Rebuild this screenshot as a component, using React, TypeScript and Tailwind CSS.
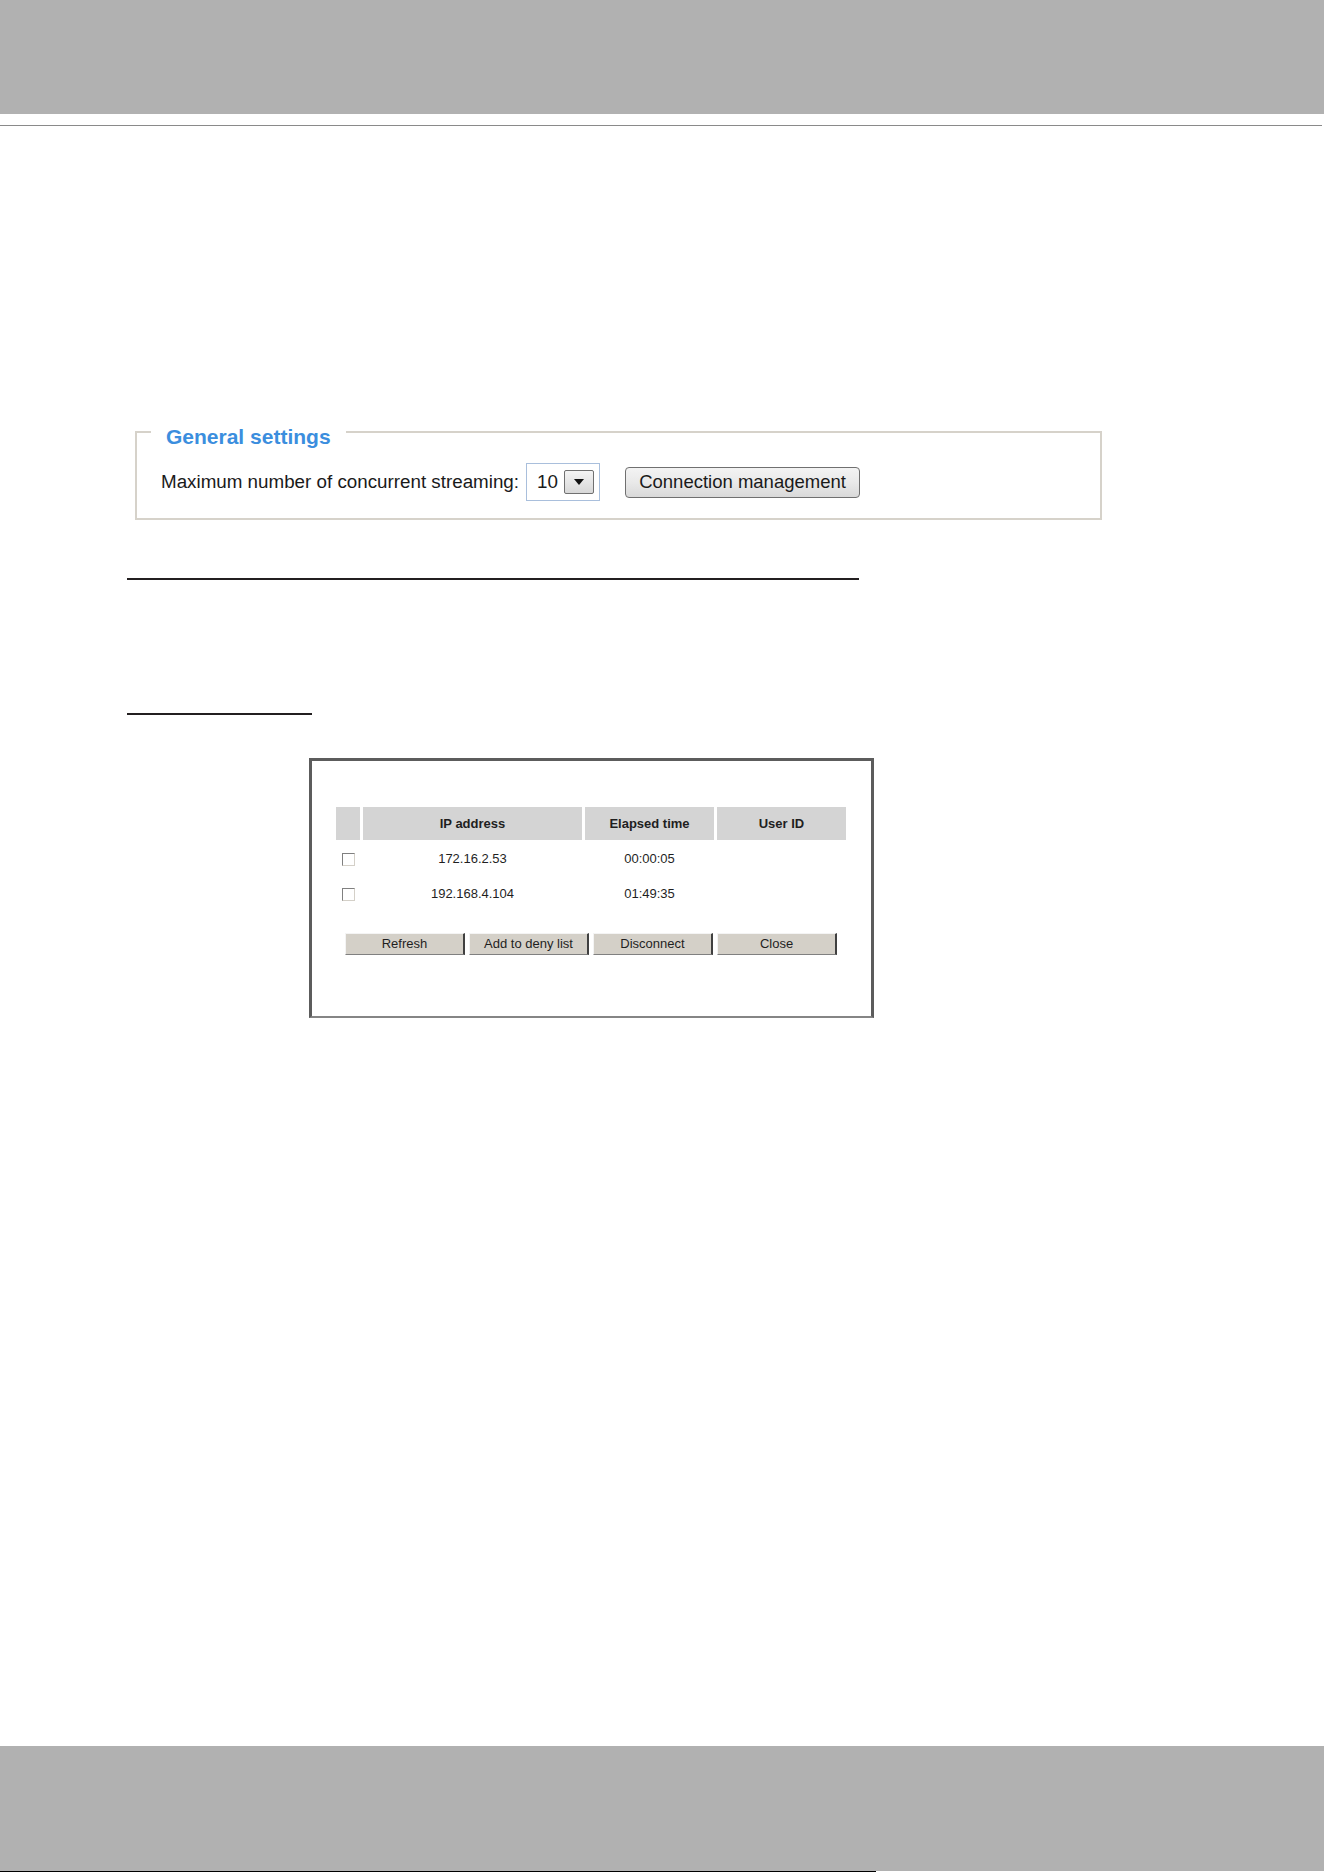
const columns = [
  { label: '', width: 'w-[24px]' },
  { label: 'IP address', width: 'w-[219px]' },
  { label: 'Elapsed time', width: 'w-[129px]' },
  { label: 'User ID', width: 'w-[129px]' }
]

const connections = [
  { ip: '172.16.2.53', elapsed: '00:00:05', user: '' },
  { ip: '192.168.4.104', elapsed: '01:49:35', user: '' }
]

const actions = ['Refresh', 'Add to deny list', 'Disconnect', 'Close']

function Checkbox() {
  return (
    <span className="block w-[13px] h-[13px] mx-auto bg-white border border-t-[#808080] border-l-[#808080] border-r-[#d4d0c8] border-b-[#d4d0c8]" />
  )
}

export default function App() {
  return (
    <div className="w-[1324px] h-[1872px] flex flex-col bg-white font-['Liberation_Sans',Arial,sans-serif]">
      {/* Page header band */}
      <div className="h-[114px] bg-[#b1b1b1]" />
      <div className="mt-[11px] mr-[2px] h-px bg-[#8a8a8a]" />

      {/* General settings */}
      <fieldset className="mt-[289px] ml-[135px] w-[967px] h-[105px] border-2 border-[#d6d2ca] pl-[24px]">
        <legend className="-ml-[10px] px-[15px] pt-[10px] text-[21px] leading-[24px] font-bold text-[#3b8ede]">
          General settings
        </legend>
        <div className="mt-[14px] flex items-center h-[38px] text-[18.8px] text-[#1a1a1a]">
          <span>Maximum number of concurrent streaming:</span>
          <div className="ml-[7px] w-[74px] h-[38px] flex items-center justify-between pl-[10px] pr-[5px] border border-[#a9bfdc] bg-white">
            <span>10</span>
            <span className="w-[30px] h-[24px] flex items-center justify-center rounded-[2px] border border-[#707070] bg-gradient-to-b from-[#f4f4f4] to-[#d8d8d8]">
              <svg width="10" height="6" viewBox="0 0 10 6">
                <path d="M0 0h10L5 6z" fill="#111" />
              </svg>
            </span>
          </div>
          <button className="ml-[25px] w-[235px] h-[31px] rounded-[4px] border border-[#707070] bg-gradient-to-b from-[#f3f3f3] via-[#e9e9e9] to-[#d9d9d9] text-[18.5px] text-[#1a1a1a]">
            Connection management
          </button>
        </div>
      </fieldset>

      {/* Section rules */}
      <div className="mt-[58px] ml-[127px] w-[732px] h-[2px] bg-[#231f20]" />
      <div className="mt-[133px] ml-[127px] w-[185px] h-[2px] bg-[#231f20]" />

      {/* Connection management window */}
      <div className="mt-[43px] ml-[309px] w-[565px] h-[260px] border-[3px] border-b-2 border-[#5c5c5c] border-b-[#858585] pl-[21px] pt-[43px]">
        <table className="border-separate border-spacing-[3px] text-[13px] text-[#1f1f1f]">
          <thead>
            <tr>
              {columns.map((col) => (
                <th key={col.label} className={`${col.width} h-[33px] p-0 bg-[#d4d4d4] font-bold text-center`}>
                  {col.label}
                </th>
              ))}
            </tr>
          </thead>
          <tbody>
            {connections.map((row) => (
              <tr key={row.ip}>
                <td className="h-[32px] p-0">
                  <Checkbox />
                </td>
                <td className="p-0 text-center">{row.ip}</td>
                <td className="p-0 text-center">{row.elapsed}</td>
                <td className="p-0 text-center">{row.user}</td>
              </tr>
            ))}
          </tbody>
        </table>

        <div className="mt-[20px] ml-[12px] flex gap-[4px]">
          {actions.map((label) => (
            <button
              key={label}
              className="w-[120px] h-[22px] bg-[#d4d0c8] border-t border-l border-t-[#f4f4f4] border-l-[#f4f4f4] border-r-2 border-r-[#404040] border-b border-b-[#808080] text-[13px] text-[#1f1f1f]"
            >
              {label}
            </button>
          ))}
        </div>
      </div>

      <div className="flex-1" />

      {/* Page footer band */}
      <div className="h-[125px] bg-[#b1b1b1]" />
      <div className="w-[876px] h-px bg-black" />
    </div>
  )
}
